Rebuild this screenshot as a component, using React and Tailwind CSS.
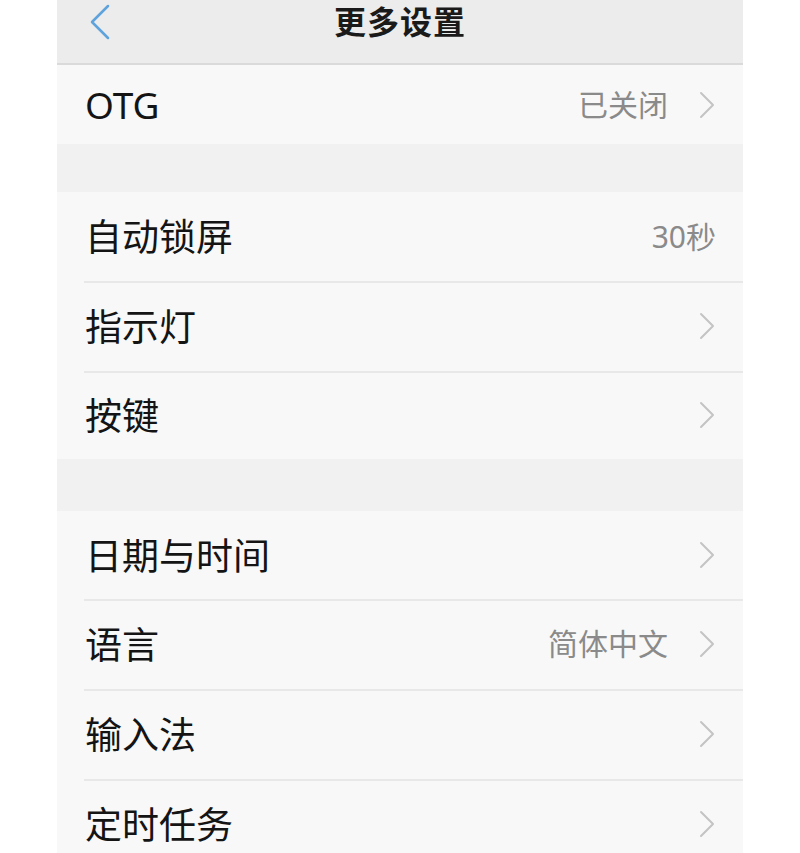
import React from "react";

const Chevron = () => (
  <svg width="18" height="28" viewBox="0 0 18 28" className="shrink-0">
    <polyline points="3,2 15,14 3,26" fill="none" stroke="#c4c4c4" strokeWidth="2" strokeLinecap="round" strokeLinejoin="round" />
  </svg>
);

const Row = ({ label, value, chevron = true, divider = false, h = "h-[90px]" }) => (
  <div className={`relative flex items-center ${h} bg-[#f8f8f8] pl-[28px] pr-[27px]`}>
    {divider && <div className="absolute top-0 left-[27px] right-0 h-[2px] bg-[#e8e8e8]" />}
    <div className="flex-1 text-[#141414] text-[37px] leading-none">{label}</div>
    {value && (
      <div className={`text-[#8a8a8a] text-[30px] leading-none ${chevron ? "mr-[30px]" : ""}`}>{value}</div>
    )}
    {chevron && <Chevron />}
  </div>
);

export default function App() {
  return (
    <div className="min-h-screen bg-white" style={{ fontFamily: '"Noto Sans", "Noto Sans CJK SC", sans-serif' }}>
      <div className="w-[686px] mx-auto overflow-hidden h-[853px] bg-[#f1f1f1]">
        <div className="relative h-[65px] bg-[#ececec] border-b-2 border-[#dadada] flex justify-center">
          <svg width="24" height="38" viewBox="0 0 24 38" className="absolute left-[31px] top-[3px]">
            <polyline points="20,3 4,19 20,35" fill="none" stroke="#5ea3dc" strokeWidth="2.5" strokeLinecap="round" strokeLinejoin="round" />
          </svg>
          <div className="text-[32px] font-bold text-[#1a1a1a] leading-[44px] tracking-[1px]">更多设置</div>
        </div>
        <Row label="OTG" value="已关闭" h="h-[79px]" />
        <div className="h-[48px]" />
        <Row label="自动锁屏" value="30秒" chevron={false} h="h-[89px]" />
        <Row label="指示灯" divider />
        <Row label="按键" divider h="h-[88px]" />
        <div className="h-[52px]" />
        <Row label="日期与时间" h="h-[88px]" />
        <Row label="语言" value="简体中文" divider />
        <Row label="输入法" divider />
        <Row label="定时任务" divider />
      </div>
    </div>
  );
}
